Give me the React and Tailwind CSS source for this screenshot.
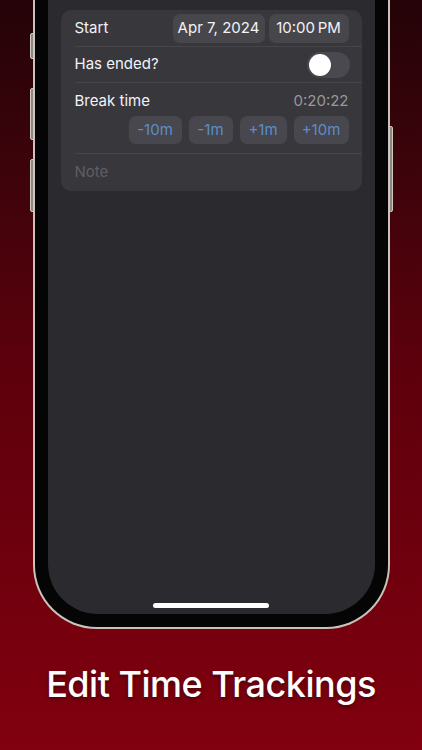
import React from 'react';

const font = { fontFamily: 'Inter, "Noto Sans", sans-serif' };

const StepButton = ({ label, width }) => (
  <button className={`h-[28px] ${width} rounded-[7px] bg-[#48474d] text-[15px] text-[#5b8ecb] flex items-center justify-center`}>
    {label}
  </button>
);

const PhoneScreen = () => (
  <div className="flex-1 bg-[#2b2a2f] rounded-b-[50px] px-[13px] pt-[10px] flex flex-col items-stretch">
    <div className="rounded-[10px] bg-[#38373c] text-[15px] text-[#f2f2f7]">
      {/* Start */}
      <div className="h-[36px] flex items-center justify-between pl-[14px] pr-[13px]">
        <span className="pt-[1px]">Start</span>
        <div className="flex gap-[4px]">
          <div className="h-[29px] w-[92px] rounded-[7px] bg-[#47464b] flex items-center justify-center">Apr 7, 2024</div>
          <div className="h-[29px] w-[80px] rounded-[7px] bg-[#47464b] flex items-center justify-center">10:00&#8201;PM</div>
        </div>
      </div>
      <div className="ml-[14px] h-px bg-[#46454a]" />

      {/* Has ended */}
      <div className="h-[35px] flex items-center justify-between pl-[14px] pr-[12px]">
        <span>Has ended?</span>
        <div className="w-[43px] h-[26px] rounded-full bg-[#4a494f] p-[2px] flex items-center">
          <div className="w-[22px] h-[22px] rounded-full bg-white shadow" />
        </div>
      </div>
      <div className="ml-[14px] h-px bg-[#46454a]" />

      {/* Break time */}
      <div className="pl-[14px] pr-[13px] pt-[9px] pb-[9px]">
        <div className="flex items-center justify-between h-[19px]">
          <span>Break time</span>
          <span className="text-[#98979d]">0:20:22</span>
        </div>
        <div className="flex justify-end gap-[7px] mt-[5px]">
          <StepButton label="-10m" width="w-[53px]" />
          <StepButton label="-1m" width="w-[44px]" />
          <StepButton label="+1m" width="w-[47px]" />
          <StepButton label="+10m" width="w-[55px]" />
        </div>
      </div>
      <div className="ml-[14px] h-px bg-[#46454a]" />

      {/* Note */}
      <div className="h-[37px] flex items-center pl-[14px] text-[#5f5e64]">Note</div>
    </div>
    <div className="flex-1" />
    <div className="flex justify-center pb-[6px]">
      <div className="w-[116px] h-[5px] rounded-full bg-white" />
    </div>
  </div>
);

export default function App() {
  return (
    <div
      className="w-full h-[750px] overflow-hidden bg-gradient-to-b from-[#240308] via-[#5e000c] to-[#82000f] flex flex-col items-center"
      style={font}
    >
      <div className="relative w-[357px] h-[629px] shrink-0">
        {/* side buttons */}
        <div className="absolute left-[-3px] top-[33px] w-[4px] h-[26px] rounded-l-[2px] bg-[#8d8781] border border-[#cfc9c2]" />
        <div className="absolute left-[-3px] top-[88px] w-[4px] h-[52px] rounded-l-[2px] bg-[#8d8781] border border-[#cfc9c2]" />
        <div className="absolute left-[-3px] top-[159px] w-[4px] h-[53px] rounded-l-[2px] bg-[#8d8781] border border-[#cfc9c2]" />
        <div className="absolute right-[-3px] top-[126px] w-[4px] h-[86px] rounded-r-[2px] bg-[#8d8781] border border-[#cfc9c2]" />
        <div className="h-full rounded-b-[64px] bg-[#c9c3bb] px-[2px] pb-[2px] flex">
          <div className="flex-1 rounded-b-[62px] bg-[#050505] px-[13px] pb-[13px] flex">
            <PhoneScreen />
          </div>
        </div>
      </div>
      <h1
        className="mt-[28px] text-[36px] font-medium text-white tracking-[-0.5px] leading-[54px] [text-shadow:0_2px_4px_rgba(0,0,0,0.45)]"
      >
        Edit Time Trackings
      </h1>
    </div>
  );
}
